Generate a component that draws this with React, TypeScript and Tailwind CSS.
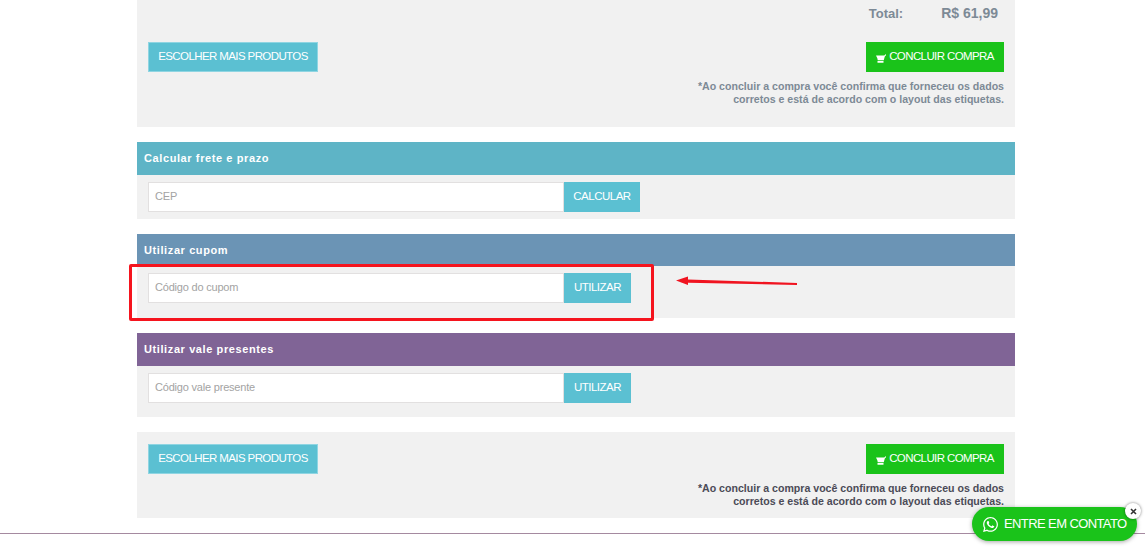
import React from "react";
import { FaWhatsapp } from "react-icons/fa";

const font = { fontFamily: '"Liberation Sans", Arial, sans-serif' };

function Cart() {
  return (
    <svg width="10" height="9" viewBox="0 0 20 18" className="mr-[3px] mt-[2px] shrink-0" fill="#fff">
      <path d="M0 3h16.5L20 0v2.4L17.6 5 15.5 12.5H3.5L2.8 9 0 3z" />
      <rect x="3" y="14" width="12" height="3.5" />
    </svg>
  );
}

function ChooseBtn() {
  return (
    <div className="w-[170px] h-[30px] bg-[#5bc0d2] border border-[#8fd5e2] flex items-center justify-center text-white text-[11.5px] tracking-[-0.6px] whitespace-nowrap">
      ESCOLHER MAIS PRODUTOS
    </div>
  );
}

function BuyBtn() {
  return (
    <div className="w-[138px] h-[30px] bg-[#1ac31a] flex items-center justify-center text-white text-[11.5px] tracking-[-0.6px] whitespace-nowrap">
      <Cart />
      CONCLUIR COMPRA
    </div>
  );
}

function Note({ dark }: { dark?: boolean }) {
  return (
    <p className={`text-right font-bold text-[10.6px] leading-[13px] mt-[8px] ${dark ? "text-[#4b4b57]" : "text-[#7d8a96]"}`}>
      *Ao concluir a compra você confirma que forneceu os dados
      <br />
      corretos e está de acordo com o layout das etiquetas.
    </p>
  );
}

function Section({
  title,
  color,
  placeholder,
  button,
  btnW,
  headH,
  bodyH,
}: {
  title: string;
  color: string;
  placeholder: string;
  button: string;
  btnW: string;
  headH: string;
  bodyH: string;
}) {
  return (
    <section className="mt-[15px]">
      <div className={`${headH} ${color} flex items-center pl-[7px] text-white font-bold text-[11px] tracking-[0.6px]`}>{title}</div>
      <div className={`${bodyH} pt-[7px] bg-[#f1f1f1] pl-[11px]`}>
        <div className="flex h-[30px]">
          <div className="w-[416px] bg-white border border-[#e2e0e0] flex items-center pl-[6px] pb-[2px] text-[11px] tracking-[-0.2px] text-[#a3a3a3]">{placeholder}</div>
          <div className={`${btnW} bg-[#5bc0d2] flex items-center justify-center pb-[1px] text-white text-[11.5px] tracking-[-0.5px]`}>{button}</div>
        </div>
      </div>
    </section>
  );
}

export default function App() {
  return (
    <div className="relative w-[1145px] h-[553px] overflow-hidden bg-white" style={font}>
      <main className="w-[878px] ml-[137px]">
        <div className="h-[127px] bg-[#f1f1f1] px-[11px] relative">
          <div className="flex justify-end h-[27px] items-center font-bold text-[14px] text-[#7d8a96] pr-[6px]">
            <span className="text-[13px]">Total:</span>
            <span className="ml-[38px]">R$ 61,99</span>
          </div>
          <div className="flex justify-between mt-[15px] items-start">
            <ChooseBtn />
            <BuyBtn />
          </div>
          <Note />
        </div>
        <Section title="Calcular frete e prazo" color="bg-[#5eb4c6]" placeholder="CEP" button="CALCULAR" btnW="w-[76px]" headH="h-[33px]" bodyH="h-[44px]" />
        <Section title="Utilizar cupom" color="bg-[#6b94b5]" placeholder="Código do cupom" button="UTILIZAR" btnW="w-[67px]" headH="h-[32px]" bodyH="h-[52px]" />
        <Section title="Utilizar vale presentes" color="bg-[#806496]" placeholder="Código vale presente" button="UTILIZAR" btnW="w-[67px]" headH="h-[33px]" bodyH="h-[51px]" />
        <div className="mt-[15px] h-[86px] bg-[#f1f1f1] px-[11px] pt-[12px]">
          <div className="flex justify-between items-start">
            <ChooseBtn />
            <BuyBtn />
          </div>
          <Note dark />
        </div>
      </main>
      <div className="mt-[15px] h-px bg-[#a58aa0]" />

      <div className="absolute left-[129px] top-[264px] w-[525px] h-[57px] border-[3px] border-[#f5141e] rounded-[2px]" />
      <svg className="absolute left-[673px] top-[275px]" width="126" height="12" viewBox="0 0 126 12">
        <path d="M3 5.5 15 1.5V4.4L124 8V10L15 7.8V10z" fill="#f01420" />
      </svg>

      <div className="absolute left-[972px] top-[507px] w-[165px] h-[34px] rounded-[17px] bg-[#1ac31a] shadow-[0_1px_4px_rgba(0,0,0,0.35)] flex items-center pl-[10px] text-white text-[13px] tracking-[-0.6px]">
        <FaWhatsapp className="text-[17px] mr-[5px] shrink-0" />
        <span className="whitespace-nowrap">ENTRE EM CONTATO</span>
      </div>
      <div className="absolute left-[1125px] top-[503px] w-[16px] h-[16px] rounded-full bg-white shadow-[0_0_3px_rgba(0,0,0,0.5)] flex items-center justify-center">
        <svg width="7" height="7" viewBox="0 0 7 7" stroke="#333" strokeWidth="1.6">
          <path d="M1 1l5 5M6 1L1 6" />
        </svg>
      </div>
    </div>
  );
}
